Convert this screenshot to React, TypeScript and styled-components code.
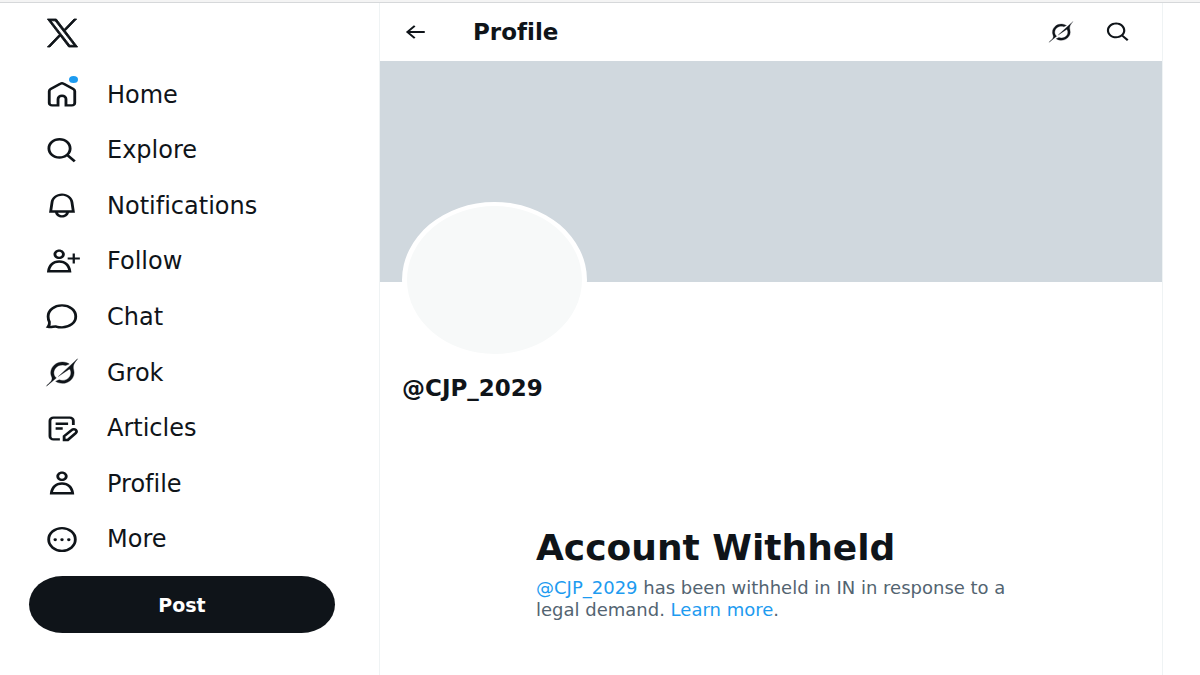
import React from 'react';
import styled, { createGlobalStyle } from 'styled-components';

const ink = '#0f1419';
const accent = '#1d9bf0';

const GlobalStyle = createGlobalStyle`
  * { box-sizing: border-box; }
  body {
    margin: 0;
    background: #fff;
    color: ${ink};
    font-family: 'DejaVu Sans', Verdana, sans-serif;
    font-variant-ligatures: none;
  }
  a { color: inherit; text-decoration: none; }
  button { font: inherit; color: inherit; border: 0; padding: 0; background: none; cursor: pointer; }
  h1, h2, p { margin: 0; }
`;

const Page = styled.div`
  display: flex;
  flex-direction: column;
  min-height: 100vh;
  border-top: 2px solid #f4f4f4;
`;

const Columns = styled.div`
  flex: 1;
  display: grid;
  grid-template-columns: minmax(0, 380fr) minmax(0, 783fr) minmax(0, 37fr);
  border-top: 1px solid #d6d8da;
`;

const Sidebar = styled.header`
  display: flex;
  flex-direction: column;
  padding: 16px 44px 0 29px;
  border-right: 1px solid #eff3f4;
`;

const LogoLink = styled.a`
  display: flex;
  height: 28px;
  margin: 0 0 20px 18px;
`;

const NavList = styled.nav`
  display: grid;
  grid-auto-rows: 1fr;
  height: 500px;
`;

const NavLink = styled.a`
  display: flex;
  align-items: center;
  gap: 28px;
  padding-left: 16px;
  font-size: 24px;
  line-height: 28px;
`;

const IconSlot = styled.span`
  position: relative;
  display: flex;
`;

const UnreadDot = styled.span`
  position: absolute;
  top: -4px;
  right: 1px;
  width: 9px;
  height: 7px;
  border-radius: 50%;
  background: ${accent};
`;

const Glyph = styled.svg<{ $w: number; $h: number }>`
  display: block;
  flex: none;
  width: ${(p) => p.$w}px;
  height: ${(p) => p.$h}px;
  overflow: visible;
  fill: currentColor;
`;

const Line = styled.path<{ $weight?: number }>`
  fill: none;
  stroke: currentColor;
  stroke-width: ${(p) => p.$weight ?? 2};
`;

const PostButton = styled.button`
  height: 57px;
  margin-top: 9px;
  border-radius: 34px / 29px;
  background: ${ink};
  color: #fff;
  font-size: 19px;
  font-weight: 700;
`;

const Main = styled.main`
  border-right: 1px solid #eff3f4;
`;

const TopBar = styled.div`
  display: flex;
  align-items: center;
  height: 58px;
  padding: 0 31px 0 22px;
`;

const IconButton = styled.button`
  display: flex;
`;

const PageTitle = styled.h2`
  flex: 1;
  padding-left: 45px;
  font-size: 23px;
  line-height: 28px;
`;

const Actions = styled.div`
  display: flex;
  gap: 31px;
`;

const Banner = styled.div`
  height: 221px;
  background: #d0d8de;
`;

const ProfileInfo = styled.section`
  padding: 0 22px;
`;

const Avatar = styled.div`
  position: relative;
  width: 185px;
  height: 156px;
  margin-top: -80px;
  border: solid #fff;
  border-width: 4px 5px;
  border-radius: 50%;
  background: #f7f9f9;
`;

const Handle = styled.h2`
  margin-top: 16px;
  font-size: 23px;
  line-height: 28px;
`;

const Notice = styled.section`
  max-width: 470px;
  margin: 124px auto 0;
`;

const NoticeTitle = styled.h1`
  font-size: 36px;
  line-height: 44px;
`;

const NoticeText = styled.p`
  margin-top: 7px;
  color: #536471;
  font-size: 18px;
  line-height: 22px;

  a { color: ${accent}; }
`;

type IconProps = { children: React.ReactNode; size?: 'nav' | 'bar' | 'logo'; viewBox?: string };

const sizes = { nav: [34, 29], bar: [26, 22], logo: [31, 28] };

function Icon({ children, size = 'nav', viewBox = '0 0 24 24' }: IconProps) {
  const [w, h] = sizes[size];
  return (
    <Glyph $w={w} $h={h} viewBox={viewBox} preserveAspectRatio="none" aria-hidden="true">
      {children}
    </Glyph>
  );
}

const personPath =
  'M5.651 19h12.698c-.337-1.8-1.023-3.21-1.945-4.19C15.318 13.65 13.838 13 12 13s-3.317.65-4.404 1.81c-.922.98-1.608 2.39-1.945 4.19zm.486-5.56C7.627 11.85 9.648 11 12 11s4.373.85 5.863 2.44c1.477 1.58 2.366 3.8 2.632 6.46l.11 1.1H3.395l.11-1.1c.266-2.66 1.155-4.88 2.632-6.46zM12 4c-1.105 0-2 .9-2 2s.895 2 2 2 2-.9 2-2-.895-2-2-2zM8 6c0-2.21 1.791-4 4-4s4 1.79 4 4-1.791 4-4 4-4-1.79-4-4z';

const XLogo = () => (
  <Icon size="logo">
    <path
      stroke="currentColor"
      strokeWidth="0.7"
      d="M14.234 10.162 22.977 0h-2.072l-7.591 8.824L7.251 0H.258l9.168 13.343L.258 24H2.33l8.016-9.318L16.749 24h6.993zm-2.837 3.299-.929-1.329L3.076 1.56h3.182l5.965 8.532.929 1.329 7.754 11.09h-3.182z"
    />
  </Icon>
);

const HomeIcon = () => (
  <Icon>
    <Line d="M9.2 21H5a2 2 0 0 1-2-2V9.3c0-.7.4-1.4 1-1.8l6.8-4.3c.7-.5 1.7-.5 2.4 0l6.8 4.3c.6.4 1 1.1 1 1.8V19a2 2 0 0 1-2 2h-4.2v-5.2a2.8 2.8 0 0 0-5.6 0z" />
  </Icon>
);

const SearchIcon = ({ size }: { size?: 'nav' | 'bar' }) => (
  <Icon size={size}>
    <path d="M10.25 3.75c-3.59 0-6.5 2.91-6.5 6.5s2.91 6.5 6.5 6.5c1.795 0 3.419-.726 4.596-1.904 1.178-1.177 1.904-2.801 1.904-4.596 0-3.59-2.91-6.5-6.5-6.5zm-8.5 6.5c0-4.694 3.806-8.5 8.5-8.5s8.5 3.806 8.5 8.5c0 1.986-.682 3.815-1.824 5.262l4.781 4.781-1.414 1.414-4.781-4.781c-1.447 1.142-3.276 1.824-5.262 1.824-4.694 0-8.5-3.806-8.5-8.5z" />
  </Icon>
);

const BellIcon = () => (
  <Icon>
    <path d="M19.993 9.042C19.48 5.017 16.054 2 11.996 2s-7.49 3.021-7.999 7.051L2.866 18H7.1c.463 2.282 2.481 4 4.9 4s4.437-1.718 4.9-4h4.236l-1.143-8.958zM12 20c-1.306 0-2.417-.835-2.829-2h5.658c-.412 1.165-1.523 2-2.829 2zm-6.866-4l.847-6.698C6.364 6.272 8.941 4 11.996 4s5.627 2.268 6.013 5.295L18.864 16H5.134z" />
  </Icon>
);

const FollowIcon = () => (
  <Icon>
    <path d={personPath} transform="translate(-2 0)" />
    <Line $weight={1.6} d="M16 9.5h8.6M20.3 5.4v8.2" />
  </Icon>
);

const ChatIcon = () => (
  <Icon>
    <Line d="M12 2.8c5.5 0 9.7 3.9 9.7 9.1s-4.2 9.1-9.7 9.1c-1.7 0-2.9-.2-4.2-.7-1.8-.2-3.4.8-5.6.2.9-1.2 1.1-2.5.9-4-.6-1.4-.9-2.9-.9-4.6 0-5.2 4.3-9.1 9.8-9.1z" />
  </Icon>
);

const GrokIcon = ({ size }: { size?: 'nav' | 'bar' }) => (
  <Icon size={size} viewBox="-1.5 -1 36 34">
    <path
      stroke="currentColor"
      strokeWidth="0.4"
      d="M12.745 20.54l10.97-8.19c.539-.4 1.307-.244 1.564.38 1.349 3.288.746 7.241-1.938 9.955-2.683 2.714-6.417 3.31-9.83 1.954l-3.728 1.745c5.347 3.697 11.84 2.782 15.898-1.324 3.219-3.255 4.216-7.692 3.284-11.693l.008.009c-1.351-5.878.332-8.227 3.782-13.031L33 0l-4.54 4.59v-.014L12.743 20.544m-2.263 1.987c-3.837-3.707-3.175-9.446.1-12.755 2.42-2.449 6.388-3.448 9.852-1.979l3.72-1.737c-.67-.49-1.53-1.017-2.515-1.387-4.455-1.854-9.789-.931-13.41 2.728-3.483 3.523-4.579 8.94-2.697 13.561 1.405 3.454-.899 5.898-3.22 8.364C1.49 30.2.666 31.074 0 32l10.478-9.466"
    />
  </Icon>
);

const ArticlesIcon = () => (
  <Icon>
    <Line d="M10.5 21H6a2.5 2.5 0 0 1-2.5-2.5v-13A2.5 2.5 0 0 1 6 3h11.5A2.5 2.5 0 0 1 20 5.5v3.7M7.5 8h8.8M7.5 12h5M13.5 21.5v-3.1l5.5-5.2a1.9 1.9 0 0 1 2.7 0 1.9 1.9 0 0 1 0 2.7l-5.6 5.6z" />
  </Icon>
);

const ProfileIcon = () => (
  <Icon>
    <path d={personPath} />
  </Icon>
);

const MoreIcon = () => (
  <Icon>
    <Line d="M2.6 12a9.4 9.4 0 1 0 18.8 0 9.4 9.4 0 1 0-18.8 0z" />
    <circle cx="7.2" cy="12.2" r="1.2" />
    <circle cx="12" cy="12.2" r="1.2" />
    <circle cx="16.8" cy="12.2" r="1.2" />
  </Icon>
);

const BackIcon = () => (
  <Icon size="bar">
    <path d="M7.414 13l5.043 5.04-1.414 1.42L3.586 12l7.457-7.46 1.414 1.42L7.414 11H21v2H7.414z" />
  </Icon>
);

const navItems = [
  { label: 'Home', ItemIcon: HomeIcon, unread: true },
  { label: 'Explore', ItemIcon: SearchIcon },
  { label: 'Notifications', ItemIcon: BellIcon },
  { label: 'Follow', ItemIcon: FollowIcon },
  { label: 'Chat', ItemIcon: ChatIcon },
  { label: 'Grok', ItemIcon: GrokIcon },
  { label: 'Articles', ItemIcon: ArticlesIcon },
  { label: 'Profile', ItemIcon: ProfileIcon },
  { label: 'More', ItemIcon: MoreIcon },
];

export default function App() {
  return (
    <Page>
      <GlobalStyle />
      <Columns>
        <Sidebar>
          <LogoLink href="#home" aria-label="X">
            <XLogo />
          </LogoLink>
          <NavList aria-label="Primary">
            {navItems.map(({ label, ItemIcon, unread }) => (
              <NavLink key={label} href={`#${label.toLowerCase()}`}>
                <IconSlot>
                  <ItemIcon />
                  {unread && <UnreadDot />}
                </IconSlot>
                {label}
              </NavLink>
            ))}
          </NavList>
          <PostButton type="button">Post</PostButton>
        </Sidebar>
        <Main>
          <TopBar>
            <IconButton type="button" aria-label="Back">
              <BackIcon />
            </IconButton>
            <PageTitle>Profile</PageTitle>
            <Actions>
              <IconButton type="button" aria-label="Grok">
                <GrokIcon size="bar" />
              </IconButton>
              <IconButton type="button" aria-label="Search">
                <SearchIcon size="bar" />
              </IconButton>
            </Actions>
          </TopBar>
          <Banner />
          <ProfileInfo>
            <Avatar />
            <Handle>@CJP_2029</Handle>
          </ProfileInfo>
          <Notice>
            <NoticeTitle>Account Withheld</NoticeTitle>
            <NoticeText>
              <a href="#cjp_2029">@CJP_2029</a> has been withheld in IN in response to a legal demand.{' '}
              <a href="#learn-more">Learn more</a>.
            </NoticeText>
          </Notice>
        </Main>
      </Columns>
    </Page>
  );
}
